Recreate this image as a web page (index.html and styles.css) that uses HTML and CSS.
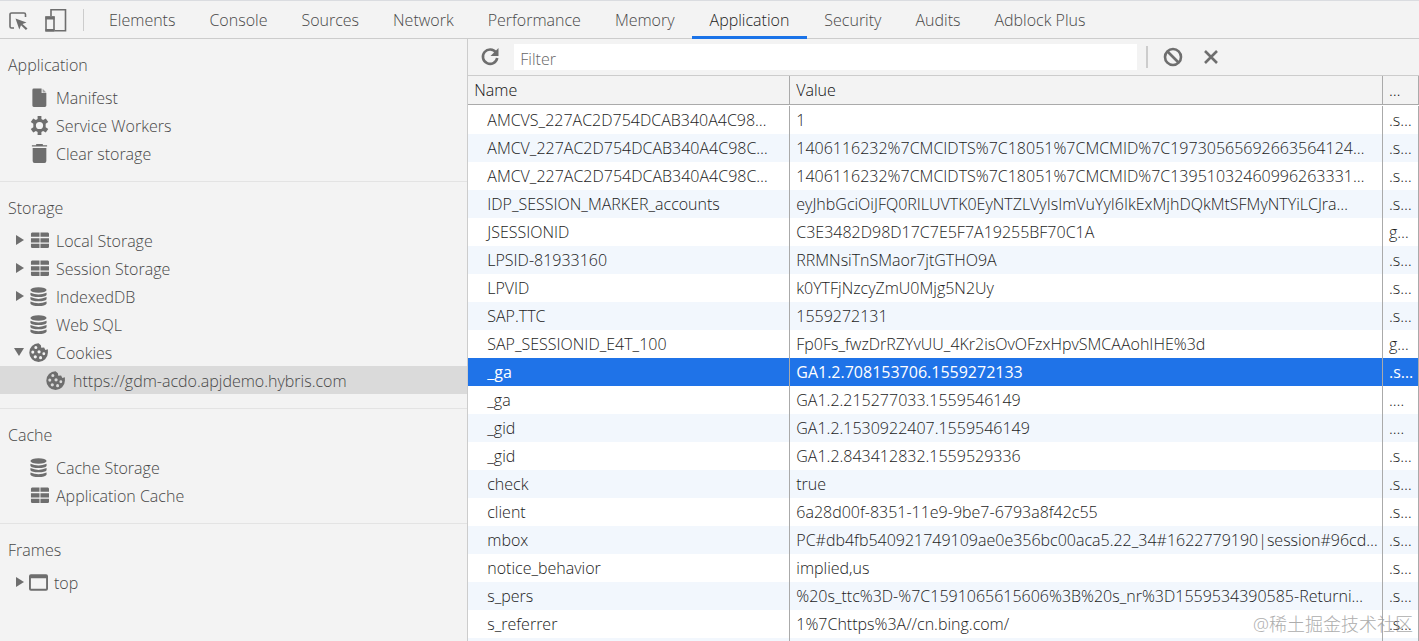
FILE: index.html
```
<!DOCTYPE html>
<html lang="en">
<head>
<meta charset="UTF-8">
<title>DevTools - Application</title>
<link rel="stylesheet" href="styles.css">
</head>
<body>

<svg class="sprite" aria-hidden="true">
    <symbol id="i-file" viewBox="0 0 20 20"><path d="M4 0.5h8.200v4.800h5v13.200a1.500 1.500 0 0 1-1.500 1.500H4A1.500 1.500 0 0 1 2.500 18.500V2A1.500 1.500 0 0 1 4 .5z"/><path d="M13.300.8l3.900 3.900h-3.900z" opacity=".6"/></symbol>
    <symbol id="i-gear" viewBox="0 0 20 20"><path fill-rule="evenodd" d="M8 0h4v3.200l1.800 1 2.800-1.600 2.600 3.800-2.700 1.700v3.800l2.700 1.700-2.600 3.800-2.800-1.600-1.800 1V20H8v-3.200l-1.800-1-2.800 1.600L.8 13.600l2.700-1.700V8.100L.8 6.400l2.600-3.800 2.800 1.600 1.800-1zM10 6.200a3.800 3.800 0 1 0 0 7.600 3.800 3.800 0 0 0 0-7.600z"/></symbol>
    <symbol id="i-trash" viewBox="0 0 20 20"><path d="M6.500 0h7v1.300H18v1.400H2V1.300h4.500zM2.800 4.200h14.400v13.800a2 2 0 0 1-2 2H4.800a2 2 0 0 1-2-2z"/></symbol>
    <symbol id="i-table" viewBox="0 0 20 20"><path d="M2 1.500h8v4.500H1V2.500zM11 1.500h8l1 1V6h-9zM1 7.500h9V12H1zM11 7.500h9V12h-9zM1 13.500h9V18H2l-1-1zM11 13.500h9V17l-1 1h-8z"/></symbol>
    <symbol id="i-db" viewBox="0 0 20 20"><ellipse cx="10" cy="3.200" rx="8.500" ry="2.900"/><path d="M1.500 6q8.500 3.800 17 0v2.300q-1.500 2.200-8.500 2.200T1.500 8.300zM1.500 10.600q8.500 3.800 17 0v2.200q-1.500 2.200-8.500 2.200t-8.500-2.200zM1.500 15.200q8.500 3.800 17 0v2.300Q17 20 10 20t-8.500-2.500z"/></symbol>
    <symbol id="i-cookie" viewBox="0 0 20 20"><path fill-rule="evenodd" d="M10 .3a9.800 9.800 0 1 0 9.900 9.900V6.600l-2.700.8-1.300-2.600-3 .2-.4-2.700zM7.200 3.200a1.600 1.600 0 1 1 0 3.200 1.600 1.600 0 0 1 0-3.200zM4 8a1.600 1.600 0 1 1 0 3.200A1.600 1.600 0 0 1 4 8zm6.600-.4a1.700 1.700 0 1 1 0 3.400 1.700 1.700 0 0 1 0-3.400zm-4 5.200a1.700 1.700 0 1 1 0 3.400 1.700 1.700 0 0 1 0-3.400zm5.600 1a1.600 1.600 0 1 1 0 3.200 1.600 1.600 0 0 1 0-3.200zm3.400-4a1.500 1.500 0 1 1 0 3 1.500 1.500 0 0 1 0-3z"/></symbol>
    <symbol id="i-frame" viewBox="0 0 20 20"><path fill-rule="evenodd" d="M2 1.300h16a2 2 0 0 1 2 2v13.400a2 2 0 0 1-2 2H2a2 2 0 0 1-2-2V3.300a2 2 0 0 1 2-2zM2 5.500v11.200h16V5.500z"/></symbol>
</svg>

<nav class="tabbar">
    <button class="tool" title="Inspect">
        <svg width="22" height="24" viewBox="0 0 22 24"><path fill="none" stroke="#6e6e6e" stroke-width="1.600" d="M7 20H4.500a1.500 1.500 0 0 1-1.500-1.500v-12A1.500 1.500 0 0 1 4.500 5H17a1.500 1.500 0 0 1 1.500 1.500V9"/><path fill="#6e6e6e" d="M8.500 10.500l11 4-4 1.600 5 4.500-1.600 1.500-4.900-4.800-1.700 4.200z"/></svg>
    </button>
    <button class="tool" title="Toggle device toolbar">
        <svg width="24" height="24" viewBox="0 0 24 24"><path fill="none" stroke="#6e6e6e" stroke-width="1.600" d="M7 8V1.800h14.500v21H11M2 9h8v13.800H2z"/><path fill="#6e6e6e" d="M1.500 8.500h9v3h-9zM1.500 21h9v2.500h-9z"/></svg>
    </button>
    <span class="divider"></span>
    <div class="tabs">
        <button class="tab">Elements</button>
        <button class="tab">Console</button>
        <button class="tab">Sources</button>
        <button class="tab">Network</button>
        <button class="tab">Performance</button>
        <button class="tab">Memory</button>
        <button class="tab active">Application</button>
        <button class="tab">Security</button>
        <button class="tab">Audits</button>
        <button class="tab">Adblock Plus</button>
    </div>
</nav>

<div class="main">
    <aside class="sidebar">
        <section>
            <h2>Application</h2>
            <ul>
                <li><svg class="icon"><use href="#i-file"/></svg>Manifest</li>
                <li><svg class="icon"><use href="#i-gear"/></svg>Service Workers</li>
                <li><svg class="icon"><use href="#i-trash"/></svg>Clear storage</li>
            </ul>
        </section>
        <section>
            <h2>Storage</h2>
            <ul>
                <li class="closed"><svg class="icon"><use href="#i-table"/></svg>Local Storage</li>
                <li class="closed"><svg class="icon"><use href="#i-table"/></svg>Session Storage</li>
                <li class="closed"><svg class="icon wide"><use href="#i-db"/></svg>IndexedDB</li>
                <li><svg class="icon wide"><use href="#i-db"/></svg>Web SQL</li>
                <li class="open"><svg class="icon wide"><use href="#i-cookie"/></svg>Cookies</li>
                <li class="child selected"><svg class="icon wide"><use href="#i-cookie"/></svg>https://gdm-acdo.apjdemo.hybris.com</li>
            </ul>
        </section>
        <section>
            <h2>Cache</h2>
            <ul>
                <li><svg class="icon wide"><use href="#i-db"/></svg>Cache Storage</li>
                <li><svg class="icon"><use href="#i-table"/></svg>Application Cache</li>
            </ul>
        </section>
        <section>
            <h2>Frames</h2>
            <ul>
                <li class="closed frame"><svg class="icon wide"><use href="#i-frame"/></svg>top</li>
            </ul>
        </section>
    </aside>

    <div class="panel">
        <div class="toolbar">
            <button class="tool" title="Refresh">
                <svg width="20" height="20" viewBox="0 0 20 20"><path fill="none" stroke="#6e6e6e" stroke-width="2.600" d="M16 5.500A7.200 7.200 0 1 0 17.200 11"/><path fill="#6e6e6e" d="M18.500 1v8h-8z"/></svg>
            </button>
            <input type="text" class="filter" placeholder="Filter" aria-label="Filter">
            <div class="actions">
                <span class="divider"></span>
                <button class="tool" title="Clear all">
                    <svg width="20" height="20" viewBox="0 0 20 20"><g fill="none" stroke="#6e6e6e" stroke-width="2.600"><circle cx="10" cy="10" r="8"/><path d="M4.500 4.500l11 11"/></g></svg>
                </button>
                <button class="tool" title="Delete selected">
                    <svg width="20" height="20" viewBox="0 0 20 20"><path fill="none" stroke="#6e6e6e" stroke-width="2.600" d="M4 4l12 12M16 4L4 16"/></svg>
                </button>
            </div>
        </div>

        <table class="cookies">
            <thead>
                <tr><th class="c-name">Name</th><th>Value</th><th class="c-domain">…</th></tr>
            </thead>
            <tbody>
                <tr><td>AMCVS_227AC2D754DCAB340A4C98…</td><td>1</td><td>.s…</td></tr>
                <tr><td>AMCV_227AC2D754DCAB340A4C98C…</td><td>1406116232%7CMCIDTS%7C18051%7CMCMID%7C19730565692663564124…</td><td>.s…</td></tr>
                <tr><td>AMCV_227AC2D754DCAB340A4C98C…</td><td>1406116232%7CMCIDTS%7C18051%7CMCMID%7C13951032460996263331…</td><td>.s…</td></tr>
                <tr><td>IDP_SESSION_MARKER_accounts</td><td>eyJhbGciOiJFQ0RILUVTK0EyNTZLVyIsImVuYyI6IkExMjhDQkMtSFMyNTYiLCJra…</td><td>.s…</td></tr>
                <tr><td>JSESSIONID</td><td>C3E3482D98D17C7E5F7A19255BF70C1A</td><td>g…</td></tr>
                <tr><td>LPSID-81933160</td><td>RRMNsiTnSMaor7jtGTHO9A</td><td>.s…</td></tr>
                <tr><td>LPVID</td><td>k0YTFjNzcyZmU0Mjg5N2Uy</td><td>.s…</td></tr>
                <tr><td>SAP.TTC</td><td>1559272131</td><td>.s…</td></tr>
                <tr><td>SAP_SESSIONID_E4T_100</td><td>Fp0Fs_fwzDrRZYvUU_4Kr2isOvOFzxHpvSMCAAohIHE%3d</td><td>g…</td></tr>
                <tr class="selected"><td>_ga</td><td>GA1.2.708153706.1559272133</td><td>.s…</td></tr>
                <tr><td>_ga</td><td>GA1.2.215277033.1559546149</td><td>.…</td></tr>
                <tr><td>_gid</td><td>GA1.2.1530922407.1559546149</td><td>.…</td></tr>
                <tr><td>_gid</td><td>GA1.2.843412832.1559529336</td><td>.s…</td></tr>
                <tr><td>check</td><td>true</td><td>.s…</td></tr>
                <tr><td>client</td><td>6a28d00f-8351-11e9-9be7-6793a8f42c55</td><td>.s…</td></tr>
                <tr><td>mbox</td><td>PC#db4fb540921749109ae0e356bc00aca5.22_34#1622779190|session#96cd…</td><td>.s…</td></tr>
                <tr><td>notice_behavior</td><td>implied,us</td><td>.s…</td></tr>
                <tr><td>s_pers</td><td>%20s_ttc%3D-%7C1591065615606%3B%20s_nr%3D1559534390585-Returni…</td><td>.s…</td></tr>
                <tr><td>s_referrer</td><td>1%7Chttps%3A//cn.bing.com/</td><td>.s…</td></tr>
                <tr><td></td><td></td><td></td></tr>
            </tbody>
        </table>
    </div>
</div>

<div class="watermark">@稀土掘金技术社区</div>

</body>
</html>
```
FILE: styles.css
```
* {
    box-sizing: border-box;
}

body {
    margin: 0;
    height: 100vh;
    display: flex;
    flex-direction: column;
    overflow: hidden;
    background: #f3f3f3;
    color: #484848;
    font-family: "Open Sans", "Noto Sans CJK SC", sans-serif;
    font-size: 16px;
    font-weight: 300;
    line-height: 20px;
}

button {
    padding: 0;
    border: none;
    background: none;
    font: inherit;
    color: inherit;
}

.sprite {
    display: none;
}

.tool {
    display: flex;
}

.divider {
    width: 1px;
    height: 22px;
    background: #ccc;
}

/* top tabs */
.tabbar {
    display: flex;
    align-items: center;
    flex: none;
    height: 39px;
    padding-left: 7px;
    gap: 15px;
    border-top: 1px solid #dadce0;
    border-bottom: 1px solid #ccc;
}

.tabs {
    display: flex;
    align-self: stretch;
    margin-left: -7px;
}

.tab {
    padding: 0 17px;
    margin-bottom: -1px;
    border-bottom: 3px solid transparent;
    border-top: 3px solid transparent;
}

.tab.active {
    padding: 0 18px;
    color: #222;
    border-bottom-color: #1a73e8;
}

.main {
    display: flex;
    flex: 1;
    min-height: 0;
}

/* sidebar tree */
.sidebar {
    flex: none;
    width: 33%;
    border-right: 1px solid #ccc;
    overflow: hidden;
}

.sidebar section {
    padding-bottom: 14px;
    border-bottom: 1px solid #e3e3e3;
}

.sidebar section:last-child {
    border-bottom: none;
}

.sidebar h2 {
    margin: 0;
    padding: 16px 8px 8px;
    font-size: inherit;
    font-weight: inherit;
}

.sidebar ul {
    margin: 0;
    padding: 0;
    list-style: none;
}

.sidebar li {
    display: flex;
    align-items: center;
    height: 28px;
    padding-top: 2px;
    padding-left: 14px;
}

.sidebar li::before {
    content: "";
    width: 10px;
    margin-right: 6px;
    margin-bottom: 2px;
}

.sidebar li.closed::before {
    border: solid transparent;
    border-width: 5px 0 5px 8px;
    border-left-color: #6e6e6e;
    margin-left: 2px;
    width: 0;
}

.sidebar li.open::before {
    border: solid transparent;
    border-width: 8px 5px 0;
    border-top-color: #6e6e6e;
    width: 0;
}

.sidebar li.child {
    padding-left: 31px;
}

.sidebar li.selected {
    background: #dadada;
}

.icon {
    width: 19px;
    height: 19px;
    margin-right: 7px;
    margin-bottom: 2px;
    fill: #6e6e6e;
}

.icon.wide {
    margin-left: -1px;
    margin-right: 8px;
}

.frame .icon.wide {
    margin-right: 6px;
}

/* cookie view */
.panel {
    flex: 1;
    min-width: 0;
    background: #fff;
}

.toolbar {
    display: flex;
    align-items: center;
    height: 37px;
    padding-left: 12px;
    gap: 14px;
    background: #f3f3f3;
    border-bottom: 1px solid #ccc;
}

.filter {
    flex: 1;
    height: 26px;
    padding: 4px 6px 0;
    border: none;
    background: #fff;
    font: inherit;
}

.filter::placeholder {
    color: #666;
}

.actions {
    display: flex;
    align-items: center;
    gap: 18px;
    width: 273px;
    margin-left: -5px;
}

.actions .divider {
    width: 2px;
    margin-right: -3px;
}

.cookies {
    width: 100%;
    table-layout: fixed;
    border-collapse: separate;
    border-spacing: 0;
    color: #1c1c1c;
}

/* hairline gap between the header and the first row */
.cookies tbody::before {
    content: "";
    display: table-row;
    height: 1px;
}

.cookies th,
.cookies td {
    height: 28px;
    padding: 0 0 0 6px;
    border-right: 1px solid #aaa;
    text-align: left;
    font-weight: inherit;
    white-space: nowrap;
    overflow: hidden;
}

.cookies th {
    height: 29px;
    background: #f3f3f3;
    border-bottom: 1px solid #aaa;
    color: #111;
}

.cookies td:first-child {
    padding-left: 19px;
}

.c-name {
    width: 322px;
}

.c-domain {
    width: 36px;
}

.cookies tbody tr:nth-child(even) {
    background: #f2f7fd;
}

.cookies tbody tr.selected {
    background: #1f73e8;
    color: #fff;
    font-weight: 400;
}

.watermark {
    position: absolute;
    right: 6px;
    bottom: 5px;
    font-size: 18px;
    line-height: 24px;
    color: #999;
    opacity: 0.8;
}
```
